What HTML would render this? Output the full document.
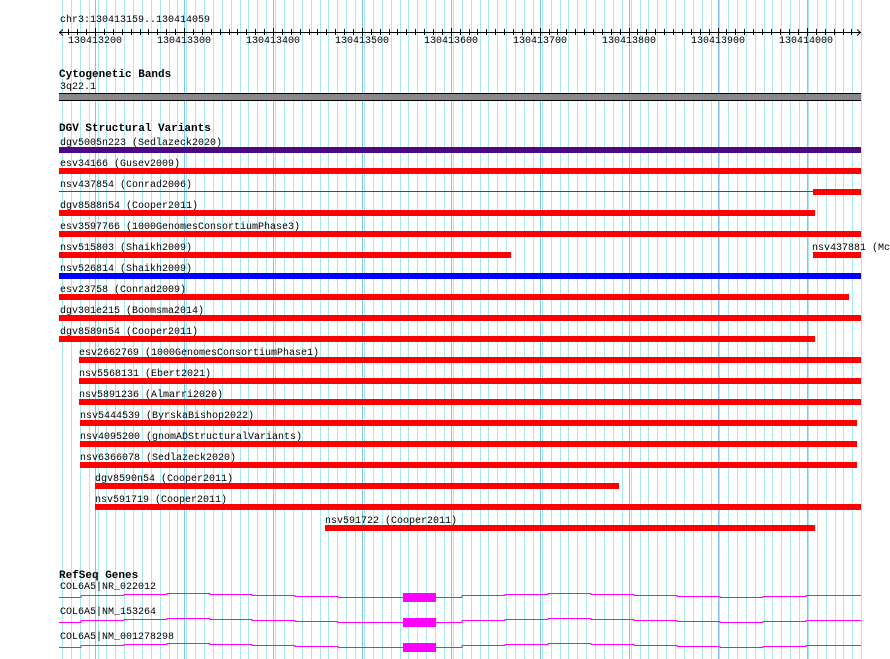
<!DOCTYPE html>
<html><head><style>
body{margin:0;width:890px;height:659px;background:#fff;position:relative;overflow:hidden;font-family:"Liberation Mono","DejaVu Sans Mono",monospace;font-size:10px;color:#000}
.t{position:absolute;white-space:nowrap;line-height:11px}
.l{position:absolute;white-space:nowrap;line-height:11px;margin-top:3px}
.h{position:absolute;white-space:nowrap;font-weight:bold;font-size:11px;line-height:12px;margin-top:1px}
.b{position:absolute;height:6px;background:#f00}
</style></head><body>
<svg style="position:absolute;left:0;top:0" width="890" height="659">
<path stroke="#a8e8ee" stroke-width="1" d="M62.5 0v659M71.5 0v659M80.5 0v659M89.5 0v659M98.5 0v659M106.5 0v659M115.5 0v659M124.5 0v659M133.5 0v659M142.5 0v659M151.5 0v659M160.5 0v659M169.5 0v659M177.5 0v659M186.5 0v659M195.5 0v659M204.5 0v659M213.5 0v659M222.5 0v659M231.5 0v659M240.5 0v659M248.5 0v659M257.5 0v659M266.5 0v659M275.5 0v659M284.5 0v659M293.5 0v659M302.5 0v659M311.5 0v659M320.5 0v659M328.5 0v659M337.5 0v659M346.5 0v659M355.5 0v659M364.5 0v659M373.5 0v659M382.5 0v659M391.5 0v659M400.5 0v659M408.5 0v659M417.5 0v659M426.5 0v659M435.5 0v659M444.5 0v659M453.5 0v659M462.5 0v659M471.5 0v659M480.5 0v659M488.5 0v659M497.5 0v659M506.5 0v659M515.5 0v659M524.5 0v659M533.5 0v659M542.5 0v659M551.5 0v659M560.5 0v659M568.5 0v659M577.5 0v659M586.5 0v659M595.5 0v659M604.5 0v659M613.5 0v659M622.5 0v659M631.5 0v659M640.5 0v659M648.5 0v659M657.5 0v659M666.5 0v659M675.5 0v659M684.5 0v659M693.5 0v659M702.5 0v659M711.5 0v659M719.5 0v659M728.5 0v659M737.5 0v659M746.5 0v659M755.5 0v659M764.5 0v659M772.5 0v659M781.5 0v659M790.5 0v659M799.5 0v659M808.5 0v659M817.5 0v659M826.5 0v659M835.5 0v659M843.5 0v659M852.5 0v659M861.5 0v659"/>
<path stroke="#84c4ee" stroke-width="1" d="M95.5 0v659M184.5 0v659M273.5 0v659M362.5 0v659M451.5 0v659M540.5 0v659M629.5 0v659M718.5 0v659M807.5 0v659"/>
</svg>
<div class="t" style="left:60px;top:15px">chr3:130413159..130414059</div>
<svg style="position:absolute;left:0;top:0" width="890" height="50">
<line x1="59" y1="32.5" x2="861" y2="32.5" stroke="#000"/>
<path d="M63 29.5 L59.5 32.5 L63 35.5 M857 29.5 L860.5 32.5 L857 35.5" stroke="#000" fill="none"/>
<g stroke="#000">
<path d="M68.5 29v6M77.5 29v6M86.5 29v6M95.5 28v8M104.5 29v6M113.5 29v6M122.5 29v6M131.5 29v6M140.5 29v6M148.5 29v6M157.5 29v6M166.5 29v6M175.5 29v6M184.5 28v8M193.5 29v6M202.5 29v6M211.5 29v6M220.5 29v6M229.5 29v6M237.5 29v6M246.5 29v6M255.5 29v6M264.5 29v6M273.5 28v8M282.5 29v6M291.5 29v6M300.5 29v6M309.5 29v6M317.5 29v6M326.5 29v6M335.5 29v6M344.5 29v6M353.5 29v6M362.5 28v8M371.5 29v6M380.5 29v6M389.5 29v6M397.5 29v6M406.5 29v6M415.5 29v6M424.5 29v6M433.5 29v6M442.5 29v6M451.5 28v8M460.5 29v6M469.5 29v6M477.5 29v6M486.5 29v6M495.5 29v6M504.5 29v6M513.5 29v6M522.5 29v6M531.5 29v6M540.5 28v8M549.5 29v6M557.5 29v6M566.5 29v6M575.5 29v6M584.5 29v6M593.5 29v6M602.5 29v6M611.5 29v6M620.5 29v6M629.5 28v8M637.5 29v6M646.5 29v6M655.5 29v6M664.5 29v6M673.5 29v6M682.5 29v6M691.5 29v6M700.5 29v6M709.5 29v6M718.5 28v8M726.5 29v6M735.5 29v6M744.5 29v6M753.5 29v6M762.5 29v6M771.5 29v6M780.5 29v6M789.5 29v6M798.5 29v6M807.5 28v8M816.5 29v6M825.5 29v6M834.5 29v6M843.5 29v6M851.5 29v6"/>
</g></svg>
<div class="t" style="left:68px;top:36px">130413200</div>
<div class="t" style="left:157px;top:36px">130413300</div>
<div class="t" style="left:246px;top:36px">130413400</div>
<div class="t" style="left:335px;top:36px">130413500</div>
<div class="t" style="left:424px;top:36px">130413600</div>
<div class="t" style="left:513px;top:36px">130413700</div>
<div class="t" style="left:602px;top:36px">130413800</div>
<div class="t" style="left:691px;top:36px">130413900</div>
<div class="t" style="left:779px;top:36px">130414000</div>

<div class="h" style="left:59px;top:68px">Cytogenetic Bands</div>
<div class="l" style="left:60px;top:79px">3q22.1</div>
<div style="position:absolute;left:59px;top:93px;width:802px;height:6px;background:#888;border-top:1px solid #000;border-bottom:1px solid #000"></div>

<div class="h" style="left:59px;top:122px">DGV Structural Variants</div>
<div class="l" style="left:60px;top:135px">dgv5005n223 (Sedlazeck2020)</div>
<div class="b" style="left:59px;top:147px;width:802px;background:#4b0a82"></div>
<div class="l" style="left:60px;top:156px">esv34166 (Gusev2009)</div>
<div class="b" style="left:59px;top:168px;width:802px"></div>
<div class="l" style="left:60px;top:177px">nsv437854 (Conrad2006)</div>
<div style="position:absolute;left:59px;top:191px;width:754px;height:1px;background:#f00"></div>
<div class="b" style="left:813px;top:189px;width:48px"></div>
<div class="l" style="left:60px;top:198px">dgv8588n54 (Cooper2011)</div>
<div class="b" style="left:59px;top:210px;width:756px"></div>
<div class="l" style="left:60px;top:219px">esv3597766 (1000GenomesConsortiumPhase3)</div>
<div class="b" style="left:59px;top:231px;width:802px"></div>
<div class="l" style="left:60px;top:240px">nsv515803 (Shaikh2009)</div>
<div class="l" style="left:812px;top:240px">nsv437881 (Mc</div>
<div class="b" style="left:59px;top:252px;width:452px"></div>
<div class="b" style="left:813px;top:252px;width:48px"></div>
<div class="l" style="left:60px;top:261px">nsv526814 (Shaikh2009)</div>
<div class="b" style="left:59px;top:273px;width:802px;background:#00f"></div>
<div class="l" style="left:60px;top:282px">esv23758 (Conrad2009)</div>
<div class="b" style="left:59px;top:294px;width:790px"></div>
<div class="l" style="left:60px;top:303px">dgv301e215 (Boomsma2014)</div>
<div class="b" style="left:59px;top:315px;width:802px"></div>
<div class="l" style="left:60px;top:324px">dgv8589n54 (Cooper2011)</div>
<div class="b" style="left:59px;top:336px;width:756px"></div>
<div class="l" style="left:79px;top:345px">esv2662769 (1000GenomesConsortiumPhase1)</div>
<div class="b" style="left:79px;top:357px;width:782px"></div>
<div class="l" style="left:79px;top:366px">nsv5568131 (Ebert2021)</div>
<div class="b" style="left:79px;top:378px;width:782px"></div>
<div class="l" style="left:79px;top:387px">nsv5891236 (Almarri2020)</div>
<div class="b" style="left:79px;top:399px;width:782px"></div>
<div class="l" style="left:80px;top:408px">nsv5444539 (ByrskaBishop2022)</div>
<div class="b" style="left:80px;top:420px;width:777px"></div>
<div class="l" style="left:80px;top:429px">nsv4095200 (gnomADStructuralVariants)</div>
<div class="b" style="left:80px;top:441px;width:777px"></div>
<div class="l" style="left:80px;top:450px">nsv6366078 (Sedlazeck2020)</div>
<div class="b" style="left:80px;top:462px;width:777px"></div>
<div class="l" style="left:95px;top:471px">dgv8590n54 (Cooper2011)</div>
<div class="b" style="left:95px;top:483px;width:524px"></div>
<div class="l" style="left:95px;top:492px">nsv591719 (Cooper2011)</div>
<div class="b" style="left:95px;top:504px;width:766px"></div>
<div class="l" style="left:325px;top:513px">nsv591722 (Cooper2011)</div>
<div class="b" style="left:325px;top:525px;width:490px"></div>

<div class="h" style="left:59px;top:569px">RefSeq Genes</div>
<div class="l" style="left:60px;top:579px">COL6A5|NR_022012</div>
<div class="l" style="left:60px;top:604px">COL6A5|NM_153264</div>
<div class="l" style="left:60px;top:629px">COL6A5|NM_001278298</div>
<svg style="position:absolute;left:0;top:0" width="890" height="659">
<g fill="none" stroke="#f0f" stroke-width="1">
<polyline id="p" points="59,597.5 81,597.5 81,595.5 124,595.5 124,594.5 167,594.5 167,593.5 210,593.5 210,594.5 252,594.5 252,595.5 295,595.5 295,596.5 338,596.5 338,597.5 403,597.5 436,597.5 462,597.5 462,595.5 505,595.5 505,594.5 548,594.5 548,593.5 591,593.5 591,594.5 634,594.5 634,595.5 677,595.5 677,596.5 720,596.5 720,597.5 763,597.5 763,596.5 806,596.5 806,595.5 861,595.5"/>
<use href="#p" y="25"/><use href="#p" y="50"/>
</g>
<g fill="#f0f"><rect x="403" y="593" width="33" height="9"/><rect x="403" y="618" width="33" height="9"/><rect x="403" y="643" width="33" height="9"/></g>
</svg>
</body></html>
